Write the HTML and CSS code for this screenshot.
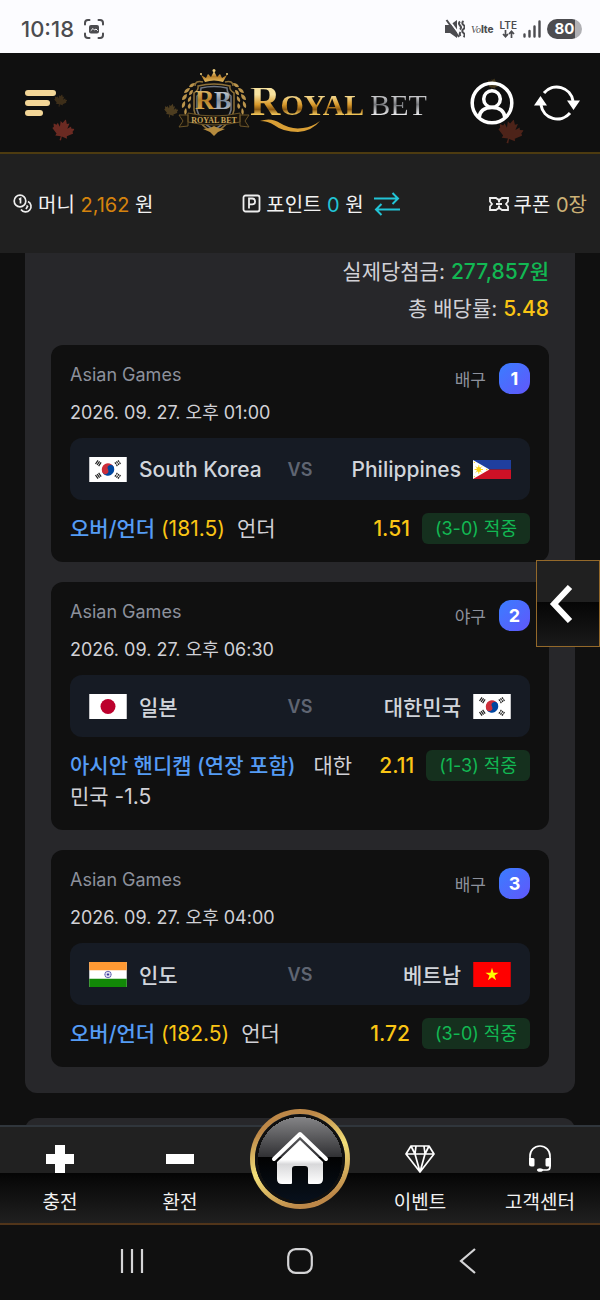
FILE: index.html
```html
<!DOCTYPE html>
<html lang="ko">
<head>
  <meta charset="UTF-8">
  <meta name="viewport" content="width=device-width, initial-scale=1">
  <title>ROYAL BET</title>
  <link rel="stylesheet" href="styles.css">
</head>
<body>

  <svg class="defs" aria-hidden="true">
    <symbol id="leaf" viewBox="0 0 24 24">
      <path d="M12 0l2.400 4.600 2.600-1.400-.8 6.300 3.300-3.600.8 2.300 3.700-.6-1.500 3.800 1.500 1.400-6.200 4.800.8 2.400-6-.8.300 4.800h-1.800l.3-4.800-6 .8.8-2.400L0 12.800l1.500-1.400L0 7.600l3.700.6.8-2.300 3.300 3.600L7 3.200l2.600 1.400z"/>
    </symbol>
    <symbol id="flag-kr" viewBox="0 0 36 24">
      <path fill="#fff" d="M0 0h36v24H0z"/>
      <g transform="rotate(-28 18 12)">
        <path fill="#cd2e3a" d="M12 12a6 6 0 0 1 12 0z"/>
        <path fill="#0047a0" d="M12 12a6 6 0 0 0 12 0z"/>
        <circle cx="15" cy="12" r="3" fill="#cd2e3a"/>
        <circle cx="21" cy="12" r="3" fill="#0047a0"/>
      </g>
      <g stroke="#222" stroke-width="1.200">
        <path d="M6 6.700l2.400-3.500M7.500 7.700l2.400-3.500M9 8.700l2.400-3.500"/>
        <path d="M6 17.300l2.400 3.500M7.500 16.300l2.400 3.500M9 15.300l2.400 3.500" stroke-dasharray="4.300 0"/>
        <path d="M30 6.700l-2.400-3.500M28.500 7.700l-2.400-3.500M27 8.700l-2.400-3.500" stroke-dasharray="1.800 .6"/>
        <path d="M30 17.300l-2.400 3.500M28.500 16.300l-2.400 3.500M27 15.300l-2.400 3.500" stroke-dasharray="1.800 .6"/>
      </g>
    </symbol>
    <symbol id="flag-jp" viewBox="0 0 36 24">
      <path fill="#fff" d="M0 0h36v24H0z"/>
      <circle cx="18" cy="12" r="7.200" fill="#bc002d"/>
    </symbol>
    <symbol id="flag-ph" viewBox="0 0 36 18">
      <path fill="#1f3f9e" d="M0 0h36v9H0z"/>
      <path fill="#ce1126" d="M0 9h36v9H0z"/>
      <path fill="#fff" d="M0 0l15.600 9L0 18z"/>
      <circle cx="5.500" cy="9" r="2.300" fill="#fcd116"/>
      <path stroke="#fcd116" stroke-width=".9" d="M5.500 5v8M1.500 9h8M2.700 6.200l5.600 5.600M8.300 6.200l-5.600 5.600"/>
      <circle cx="1.300" cy="2.300" r=".6" fill="#fcd116"/>
      <circle cx="1.300" cy="15.700" r=".6" fill="#fcd116"/>
      <circle cx="13" cy="9" r=".7" fill="#fcd116"/>
    </symbol>
    <symbol id="flag-in" viewBox="0 0 36 24">
      <path fill="#fff" d="M0 0h36v24H0z"/>
      <path fill="#ff9933" d="M0 0h36v8H0z"/>
      <path fill="#128807" d="M0 16h36v8H0z"/>
      <circle cx="18" cy="12" r="3.100" fill="none" stroke="#33339a" stroke-width=".7"/>
      <circle cx="18" cy="12" r="1" fill="#33339a"/>
      <path stroke="#33339a" stroke-width=".3" d="M18 9v6M15 12h6M15.900 9.900l4.200 4.200M20.100 9.900l-4.200 4.200"/>
    </symbol>
    <symbol id="flag-vn" viewBox="0 0 36 24">
      <path fill="#f00" d="M0 0h36v24H0z"/>
      <path fill="#ff0" d="M18 5.600l1.500 4.600h4.800l-3.900 2.800 1.500 4.600-3.900-2.900-3.900 2.900 1.500-4.600-3.900-2.800h4.800z"/>
    </symbol>
  </svg>

  <!-- 상태 표시줄 -->
  <div class="status-bar">
    <div class="status-left">
      <span class="clock">10:18</span>
      <svg width="20" height="20" viewBox="0 0 20 20" fill="none" stroke="#4c4c50" stroke-width="2" stroke-linecap="round">
        <path d="M1 5.500V4a3 3 0 0 1 3-3h1.500M14.500 1H16a3 3 0 0 1 3 3v1.500M19 14.500V16a3 3 0 0 1-3 3h-1.500M5.500 19H4a3 3 0 0 1-3-3v-1.500"/>
        <rect x="5" y="6" width="10" height="8.500" rx="2" fill="#4c4c50" stroke="none"/>
        <path d="M7 11.500l2-2 1.500 1.500 1.500-1 1.500 1.500" stroke="#fcfcff" stroke-width="1"/>
      </svg>
    </div>
    <div class="status-right">
      <svg width="20" height="20" viewBox="0 0 20 20" fill="#4c4c50">
        <path d="M0 6h5L12 1v18l-7-5H0z"/>
        <path d="M3 0l12 16" stroke="#fcfcff" stroke-width="2"/>
        <path d="M1.500 1l12.500 17" stroke="#4c4c50" stroke-width="2"/>
        <path d="M15 2.500q-2 2 0 4t0 4M18.500 2q-2.500 2 0 4t0 4 0 4 0 4M15.500 13q-1.500 2 0 4" fill="none" stroke="#4c4c50" stroke-width="2"/>
      </svg>
      <span class="volte"><i>Vo</i>lte</span>
      <span class="lte">LTE
        <svg width="13" height="8" viewBox="0 0 13 8" fill="none" stroke="#4c4c50" stroke-width="1.700">
          <path d="M3.500 0v6.500M1 4l2.500 2.700L6 4M9.500 8V1.500M7 4l2.500-2.700L12 4"/>
        </svg>
      </span>
      <svg width="18" height="18" viewBox="0 0 18 18" stroke="#4c4c50" stroke-width="2.400" stroke-linecap="round">
        <path d="M1.500 14.500v2M6.500 11v5.500M11.500 6.500v10M16.500 1.500v15"/>
      </svg>
      <span class="battery">80</span>
    </div>
  </div>

  <!-- 헤더 -->
  <header class="header">
    <button class="icon-btn menu-btn" type="button" aria-label="메뉴">
      <svg width="32" height="26" viewBox="0 0 32 26" fill="#f3d697">
        <rect width="31" height="6" rx="3"/>
        <rect y="10" width="25" height="6" rx="3"/>
        <rect y="20" width="18" height="6" rx="3"/>
      </svg>
    </button>

    <a class="logo" href="#" aria-label="ROYAL BET">
      <svg class="emblem" width="72" height="68" viewBox="0 0 72 68">
        <defs>
          <linearGradient id="gold" x1="0" y1="0" x2="0" y2="1">
            <stop offset="0" stop-color="#f6dd91"/>
            <stop offset=".5" stop-color="#b67f28"/>
            <stop offset="1" stop-color="#e6bd62"/>
          </linearGradient>
          <linearGradient id="silver" x1="0" y1="0" x2="0" y2="1">
            <stop offset="0" stop-color="#eef2f7"/>
            <stop offset=".5" stop-color="#7f8b9a"/>
            <stop offset="1" stop-color="#c9d0d8"/>
          </linearGradient>
        </defs>
        <path fill="url(#gold)" d="M27 13l-4-7 5 3 2-4 3 3 3-6 3 6 3-3 2 4 5-3-4 7q-9-3-18 0z"/>
        <circle cx="36" cy="1.500" r="1.500" fill="#f0cf7d"/>
        <circle cx="23" cy="5" r="1" fill="#f0cf7d"/>
        <circle cx="49" cy="5" r="1" fill="#f0cf7d"/>
        <path fill="none" stroke="#8d7038" stroke-width="1.500" d="M25 13q-8-2-8 4M47 13q8-2 8 4M20 17q8-2 16-2t16 2q-1 4 4 7v17q-3 14-20 23-17-9-20-23V24q5-3 4-7z"/>
        <path fill="none" stroke="#6f7682" stroke-width="1.500" d="M23 19q13-3 26 0 0 5 4 8v14q-3 12-17 20-14-8-17-20V27q4-3 4-8z"/>
        <g fill="#b9934b">
          <path d="M17 14q-5 0-6 4 5 1 6-4zM12 19q-5 0-6 5 5 0 6-5zM9 25q-5 1-5 6 5 0 5-6zM7 32q-4 2-3 7 4-1 3-7zM8 39q-3 3-1 7 3-2 1-7zM15 21q0 5-4 5 0-5 4-5zM13 27q1 5-3 6-1-4 3-6zM12 34q2 4-1 6-3-3 1-6z"/>
          <path d="M55 14q5 0 6 4-5 1-6-4zM60 19q5 0 6 5-5 0-6-5zM63 25q5 1 5 6-5 0-5-6zM65 32q4 2 3 7-4-1-3-7zM64 39q3 3 1 7-3-2-1-7zM57 21q0 5 4 5 0-5-4-5zM59 27q-1 5 3 6 1-4-3-6zM60 34q-2 4 1 6 3-3-1-6z"/>
        </g>
        <text x="17" y="40" font-size="27" fill="url(#gold)">R</text>
        <text x="36" y="40" font-size="26" fill="url(#silver)">B</text>
        <path fill="#17130c" stroke="#6b5428" d="M10 44q26 6 52 0v9q-26 6-52 0zM10 46H1l4 6-4 6 9-1zM62 46h9l-4 6 4 6-9-1z"/>
        <text x="36" y="54" font-size="8" text-anchor="middle" fill="#caa65c">ROYAL BET</text>
        <path fill="#b58b3e" d="M36 67l-4-4-7-3 7-1 4-2 4 2 7 1-7 3z"/>
      </svg>
      <span class="wordmark">
        <span class="gold"><span class="cap">R</span>OYAL</span>
        <span class="silver">BET</span>
        <svg class="swash" width="60" height="13" viewBox="0 0 60 13" aria-hidden="true">
          <path fill="#d99f35" d="M0 2q11-4 20 2 11 7 23 5 9-1 17-7-8 10-22 11Q23 13 14 6 8 2 0 2z"/>
        </svg>
      </span>
    </a>

    <div class="header-actions">
      <button class="icon-btn" type="button" aria-label="내 정보">
        <svg width="44" height="44" viewBox="0 0 44 44" fill="none" stroke="#fff" stroke-width="3.500">
          <circle cx="22" cy="22" r="19.800"/>
          <circle cx="22" cy="18" r="8.300"/>
          <path d="M9 37q1-10.500 13-10.500T35 37"/>
        </svg>
      </button>
      <button class="icon-btn" type="button" aria-label="새로고침">
        <svg width="46" height="38" viewBox="0 0 46 38" fill="none" stroke="#fff" stroke-width="3">
          <path d="M10 9A16.500 16.500 0 0 1 39 17M36 29A16.500 16.500 0 0 1 7 21"/>
          <path fill="#fff" stroke="none" d="M33 16.500h13L39.500 26zM0 21.500h13L6.500 12z"/>
        </svg>
      </button>
    </div>

    <svg class="leaf leaf-a"><use href="#leaf"/></svg>
    <svg class="leaf leaf-b"><use href="#leaf"/></svg>
    <svg class="leaf leaf-c"><use href="#leaf"/></svg>
    <svg class="leaf leaf-d"><use href="#leaf"/></svg>
    <svg class="leaf leaf-e"><use href="#leaf"/></svg>
  </header>

  <!-- 보유 금액 -->
  <div class="wallet">
    <div class="wallet-item">
      <svg width="20" height="20" viewBox="0 0 20 20" fill="none" stroke="#eee" stroke-width="1.700">
        <circle cx="7" cy="7" r="5.800"/>
        <path d="M6 5.500l1.500-1v5M15 7.500a5.500 5.500 0 1 1-7 8M13.500 11.500l1 1-1.500 2.500"/>
      </svg>
      <span>머니 <span class="money">2,162</span> 원</span>
    </div>
    <div class="wallet-item">
      <svg width="19" height="19" viewBox="0 0 19 19" fill="none" stroke="#eee" stroke-width="1.800">
        <rect x="1.500" y="1.500" width="16" height="16" rx="2"/>
        <path d="M7 14.500v-10h3.200a2.900 2.900 0 0 1 0 5.800H7"/>
      </svg>
      <span>포인트 <span class="point">0</span> 원</span>
      <button class="icon-btn swap-btn" type="button" aria-label="포인트 전환">
        <svg width="26" height="24" viewBox="0 0 26 24" fill="none" stroke="#22c4d6" stroke-width="2">
          <path d="M0 6.500h24M18.500 1l5.500 5.500-5.500 5.500M26 17.500H2M7.500 12L2 17.500 7.500 23"/>
        </svg>
      </button>
    </div>
    <div class="wallet-item">
      <svg width="20" height="14" viewBox="0 0 20 14" fill="none" stroke="#eee" stroke-width="1.800">
        <path d="M1 1h6l2 1.500h2L13 1h6v3.500l-2 2.500 2 2.500V13h-6l-2-1.500H9L7 13H1V9.500L3 7 1 4.500z"/>
        <path d="M10 3v2.500M10 8.500V11M7 7h6" stroke-width="2"/>
      </svg>
      <span>쿠폰 <span class="coupon">0장</span></span>
    </div>
  </div>

  <!-- 베팅 내역 -->
  <main class="content">
    <section class="slip">
      <p class="summary">실제당첨금: <strong class="win">277,857원</strong></p>
      <p class="summary">총 배당률: <strong class="rate">5.48</strong></p>

      <div class="games">
        <article class="game">
          <div class="game-head">
            <div>
              <h2 class="league">Asian Games</h2>
              <time class="date" datetime="2026-09-27T13:00">2026. 09. 27. 오후 01:00</time>
            </div>
            <div class="sport">배구 <span class="num">1</span></div>
          </div>
          <div class="match">
            <span class="team"><svg class="flag"><use href="#flag-kr"/></svg>South Korea</span>
            <span class="vs">VS</span>
            <span class="team away">Philippines<svg class="flag"><use href="#flag-ph"/></svg></span>
          </div>
          <div class="pick">
            <p class="pick-name"><span class="market">오버/언더</span> <span class="line">(181.5)</span><span class="choice">언더</span></p>
            <span class="odds">1.51</span>
            <span class="result">(3-0) 적중</span>
          </div>
        </article>

        <article class="game">
          <div class="game-head">
            <div>
              <h2 class="league">Asian Games</h2>
              <time class="date" datetime="2026-09-27T18:30">2026. 09. 27. 오후 06:30</time>
            </div>
            <div class="sport">야구 <span class="num">2</span></div>
          </div>
          <div class="match">
            <span class="team"><svg class="flag"><use href="#flag-jp"/></svg>일본</span>
            <span class="vs">VS</span>
            <span class="team away">대한민국<svg class="flag"><use href="#flag-kr"/></svg></span>
          </div>
          <div class="pick">
            <p class="pick-name"><span class="market">아시안 핸디캡 (연장 포함)</span> <span class="choice">대한민국 -1.5</span></p>
            <span class="odds">2.11</span>
            <span class="result">(1-3) 적중</span>
          </div>
        </article>

        <article class="game">
          <div class="game-head">
            <div>
              <h2 class="league">Asian Games</h2>
              <time class="date" datetime="2026-09-27T16:00">2026. 09. 27. 오후 04:00</time>
            </div>
            <div class="sport">배구 <span class="num">3</span></div>
          </div>
          <div class="match">
            <span class="team"><svg class="flag"><use href="#flag-in"/></svg>인도</span>
            <span class="vs">VS</span>
            <span class="team away">베트남<svg class="flag"><use href="#flag-vn"/></svg></span>
          </div>
          <div class="pick">
            <p class="pick-name"><span class="market">오버/언더</span> <span class="line">(182.5)</span><span class="choice">언더</span></p>
            <span class="odds">1.72</span>
            <span class="result">(3-0) 적중</span>
          </div>
        </article>
      </div>
    </section>
    <section class="slip slip-next"></section>
  </main>

  <button class="side-btn" type="button" aria-label="베팅 슬립 열기">
    <svg width="24" height="38" viewBox="0 0 24 38" fill="none" stroke="#fff" stroke-width="6">
      <path d="M21 2L5 19l16 17"/>
    </svg>
  </button>

  <!-- 하단 메뉴 -->
  <nav class="bottom-nav">
    <a href="#">
      <svg width="30" height="28" viewBox="0 0 30 28" fill="#fff"><path d="M10 0h10v9h9v10h-9v9H10v-9H1V9h9z"/></svg>
      충전
    </a>
    <a href="#">
      <svg width="30" height="28" viewBox="0 0 30 28" fill="#fff"><path d="M1 9h28v10H1z"/></svg>
      환전
    </a>
    <a class="home" href="#" aria-label="홈">
      <svg width="60" height="56" viewBox="0 0 60 56">
        <defs>
          <linearGradient id="house" x1="0" y1="0" x2="0" y2="1">
            <stop offset="0" stop-color="#fff"/>
            <stop offset=".45" stop-color="#fff"/>
            <stop offset=".55" stop-color="#d8d8da"/>
            <stop offset="1" stop-color="#fff"/>
          </linearGradient>
        </defs>
        <path fill="none" stroke="#fff" stroke-width="4" stroke-linecap="round" stroke-linejoin="round" d="M4 28L30 3l26 25"/>
        <path fill="url(#house)" d="M30 9l23 22v17q0 5-5 5h-9q-1 0-1-1V38q0-3-3-3H25q-3 0-3 3v14q0 1-1 1h-9q-5 0-5-5V31z"/>
      </svg>
    </a>
    <a href="#">
      <svg width="30" height="28" viewBox="0 0 30 28" fill="none" stroke="#fff" stroke-width="1.700" stroke-linejoin="round">
        <path d="M6 1h18l5 8-14 18L1 9zM1 9h28M6 1l4 8 5 18 5-18 4-8M10 9l1-8M20 9l-1-8"/>
      </svg>
      이벤트
    </a>
    <a href="#">
      <svg width="30" height="28" viewBox="0 0 30 28" fill="none" stroke="#fff" stroke-width="1.700">
        <path d="M5 17v-6a10 10 0 0 1 20 0v11q0 3-3 3h-6"/>
        <path fill="#fff" stroke="none" d="M4 13h4q1.500 0 1.500 1.500V20q0 1.500-1.500 1.500H6.500Q4 21.500 4 19zM26 13h-4q-1.500 0-1.500 1.500V20q0 1.500 1.500 1.500h4z"/>
        <ellipse cx="15" cy="25" rx="3" ry="1.800" fill="#fff" stroke="none"/>
      </svg>
      고객센터
    </a>
  </nav>

  <!-- 시스템 내비게이션 -->
  <div class="system-nav">
    <button class="icon-btn" type="button" aria-label="최근 앱">
      <svg width="26" height="26" viewBox="0 0 26 26" stroke="#d4d4d6" stroke-width="2.200"><path d="M3 1v24M13 1v24M23 1v24"/></svg>
    </button>
    <button class="icon-btn" type="button" aria-label="홈 화면">
      <svg width="26" height="26" viewBox="0 0 26 26" fill="none" stroke="#d4d4d6" stroke-width="2.200"><rect x="1.200" y="1.200" width="23.600" height="23.600" rx="7.500"/></svg>
    </button>
    <button class="icon-btn" type="button" aria-label="뒤로">
      <svg width="26" height="26" viewBox="0 0 26 26" fill="none" stroke="#d4d4d6" stroke-width="2.200"><path d="M20 1L6 13l14 12"/></svg>
    </button>
  </div>

</body>
</html>
```
FILE: styles.css
```css
* {
  box-sizing: border-box;
}

body {
  margin: 0;
  height: 100vh;
  display: flex;
  flex-direction: column;
  position: relative;
  background-color: #101010;
  color: #f2f2f2;
  font-family: Inter, "Noto Sans CJK KR", sans-serif;
}

svg {
  display: block;
  flex: none;
}

a {
  color: inherit;
  text-decoration: none;
}

p, h2 {
  margin: 0;
}

.defs {
  position: absolute;
  width: 0;
  height: 0;
}

.icon-btn {
  padding: 0;
  border: none;
  background: none;
  cursor: pointer;
}

/* status bar */
.status-bar {
  flex: none;
  height: 53px;
  padding: 4px 18px 0 21px;
  display: flex;
  align-items: center;
  justify-content: space-between;
  background-color: #fcfcff;
  color: #4c4c50;
}

.status-left, .status-right {
  display: flex;
  align-items: center;
  gap: 10px;
}

.status-right {
  gap: 6px;
}

.clock {
  font-size: 22px;
  font-weight: 500;
}

.volte {
  font-size: 10px;
  font-weight: 800;
}

.volte i {
  font-family: "Liberation Serif", serif;
  font-weight: 400;
}

.lte {
  display: flex;
  flex-direction: column;
  align-items: center;
  font-size: 10px;
  line-height: 10px;
  font-weight: 600;
}

.battery {
  width: 35px;
  height: 20px;
  border-radius: 10px;
  background: linear-gradient(to right, #4c4c50 80%, #b0b0b4 80%);
  color: #fff;
  font-size: 15px;
  line-height: 20px;
  font-weight: 700;
  text-align: center;
}

/* header */
.header {
  flex: none;
  height: 101px;
  padding: 0 20px 0 25px;
  position: relative;
  display: grid;
  grid-template-columns: 1fr auto 1fr;
  align-items: center;
  border-bottom: 2px solid #4d3b10;
}

.menu-btn {
  justify-self: start;
}

.logo {
  display: flex;
  align-items: center;
}

.emblem text {
  font-family: "Liberation Serif", serif;
  font-weight: 700;
}

.wordmark {
  position: relative;
  font-family: "Liberation Serif", serif;
  font-size: 30px;
  line-height: 44px;
  font-weight: 700;
  white-space: nowrap;
}

.cap {
  font-size: 42px;
}

.gold {
  background: linear-gradient(#f8e3a0 20%, #d99a2b 50%, #8d5a12 65%, #f0c458 80%);
  background-clip: text;
  color: transparent;
}

.silver {
  background: linear-gradient(#d8d8da 20%, #77797d 50%, #e8e8ea 80%);
  background-clip: text;
  color: transparent;
  font-weight: 400;
}

.swash {
  position: absolute;
  left: 10px;
  bottom: -5px;
}

.header-actions {
  justify-self: end;
  display: flex;
  align-items: center;
  gap: 20px;
}

/* falling leaves */
.leaf {
  position: absolute;
  width: 22px;
  height: 22px;
  fill: #6b2a22;
  transform: rotate(15deg);
}

.leaf-a {
  left: 52px;
  top: 66px;
}

.leaf-b {
  left: 54px;
  top: 41px;
  width: 13px;
  height: 13px;
  fill: #3d2e19;
}

.leaf-c {
  left: 164px;
  top: 49px;
  width: 14px;
  height: 17px;
  fill: #4d3d20;
}

.leaf-d {
  left: 498px;
  top: 66px;
  width: 25px;
  height: 25px;
  fill: #4d2319;
}

.leaf-e {
  left: 487px;
  top: 25px;
  width: 12px;
  height: 12px;
  fill: #43371c;
  z-index: -1;
}

/* wallet */
.wallet {
  flex: none;
  height: 99px;
  padding: 0 13px;
  display: flex;
  align-items: center;
  justify-content: space-between;
  background-color: #202020;
  font-size: 20px;
}

.wallet-item {
  display: flex;
  align-items: center;
  gap: 5px;
}

.swap-btn {
  margin-left: 5px;
}

.money {
  color: #d5830d;
}

.point {
  color: #22c4d6;
}

.coupon {
  color: #cdb277;
}

/* content */
.content {
  flex: 1;
  min-height: 0;
  overflow: hidden;
  padding: 0 25px;
}

.slip {
  padding: 0 26px 26px;
  border-radius: 0 0 12px 12px;
  background-color: #27272a;
}

.slip-next {
  margin-top: 25px;
  border-radius: 12px 12px 0 0;
}

.summary {
  font-size: 21px;
  line-height: 37px;
  text-align: right;
  color: #d1d1d6;
}

.summary strong {
  font-weight: 500;
}

.win {
  color: #12b853;
}

.rate {
  color: #fac515;
}

.games {
  padding-top: 18px;
  display: flex;
  flex-direction: column;
  gap: 20px;
}

.game {
  padding: 18px 19px;
  border-radius: 12px;
  background-color: #101010;
}

.game-head {
  display: flex;
  justify-content: space-between;
  align-items: flex-start;
}

.league {
  font-size: 18px;
  line-height: 24px;
  font-weight: 400;
  color: #8d919c;
}

.date {
  display: block;
  margin-top: 12px;
  font-size: 18px;
  line-height: 28px;
  color: #d1d1d6;
}

.sport {
  display: flex;
  align-items: center;
  gap: 13px;
  font-size: 17px;
  color: #8d919c;
}

.num {
  width: 31px;
  height: 31px;
  border-radius: 12px;
  background: linear-gradient(135deg, #3a7dff, #6157fb);
  color: #fff;
  font-size: 18px;
  line-height: 31px;
  font-weight: 700;
  text-align: center;
}

.match {
  margin-top: 11px;
  height: 62px;
  padding: 0 19px;
  display: grid;
  grid-template-columns: 1fr auto 1fr;
  align-items: center;
  border-radius: 12px;
  background-color: #161b24;
}

.team {
  display: flex;
  align-items: center;
  gap: 12px;
  font-size: 21px;
  font-weight: 500;
  color: #d1d5db;
}

.away {
  justify-content: flex-end;
}

.flag {
  width: 38px;
  height: 25px;
}

.vs {
  font-size: 18px;
  font-weight: 600;
  color: #5f6572;
}

.pick {
  margin-top: 13px;
  display: flex;
  align-items: flex-start;
  gap: 12px;
  font-size: 21px;
  line-height: 31px;
}

.pick-name {
  flex: 1;
  color: #d1d1d6;
}

.market {
  color: #559cf5;
  font-weight: 500;
}

.line {
  color: #fac515;
}

.choice {
  margin-left: 12px;
}

.odds {
  color: #fac515;
  font-weight: 500;
}

.result {
  padding: 0 13px;
  border-radius: 6px;
  background-color: #15301e;
  color: #12b853;
  font-size: 18px;
}

/* side button */
.side-btn {
  position: absolute;
  right: 0;
  top: 560px;
  width: 64px;
  height: 87px;
  padding: 0 0 0 12px;
  border: 1px solid #94692a;
  background: linear-gradient(#202020 48%, #050505 48%, #1a1a1a);
  cursor: pointer;
}

/* bottom nav */
.bottom-nav {
  flex: none;
  height: 100px;
  position: relative;
  display: grid;
  grid-template-columns: repeat(5, 1fr);
  border-top: 2px solid #30363c;
  border-bottom: 2px solid #51351a;
  background: linear-gradient(#212121 48%, #050505 48%, #202020);
}

.bottom-nav a {
  padding-top: 18px;
  display: flex;
  flex-direction: column;
  align-items: center;
  gap: 16px;
  font-size: 19px;
  line-height: 28px;
}

/* sits above the bar */
.bottom-nav .home {
  position: absolute;
  left: 50%;
  top: -18px;
  width: 100px;
  height: 100px;
  margin-left: -50px;
  padding: 0;
  justify-content: center;
  border: 5px solid transparent;
  border-radius: 50%;
  background:
    radial-gradient(circle at 50% 50%, transparent 42px, #101010 42px) padding-box,
    linear-gradient(#8b8b8d, #303033 48%, #020202 48%, #08111d) padding-box,
    linear-gradient(160deg, #bd8848 20%, #f3e079 50%, #bd8848 85%) border-box;
}

.bottom-nav .home + a {
  grid-column: 4;
}

/* system nav */
.system-nav {
  flex: none;
  height: 75px;
  padding: 0 48px 3px;
  display: flex;
  align-items: center;
  justify-content: space-around;
}
```
